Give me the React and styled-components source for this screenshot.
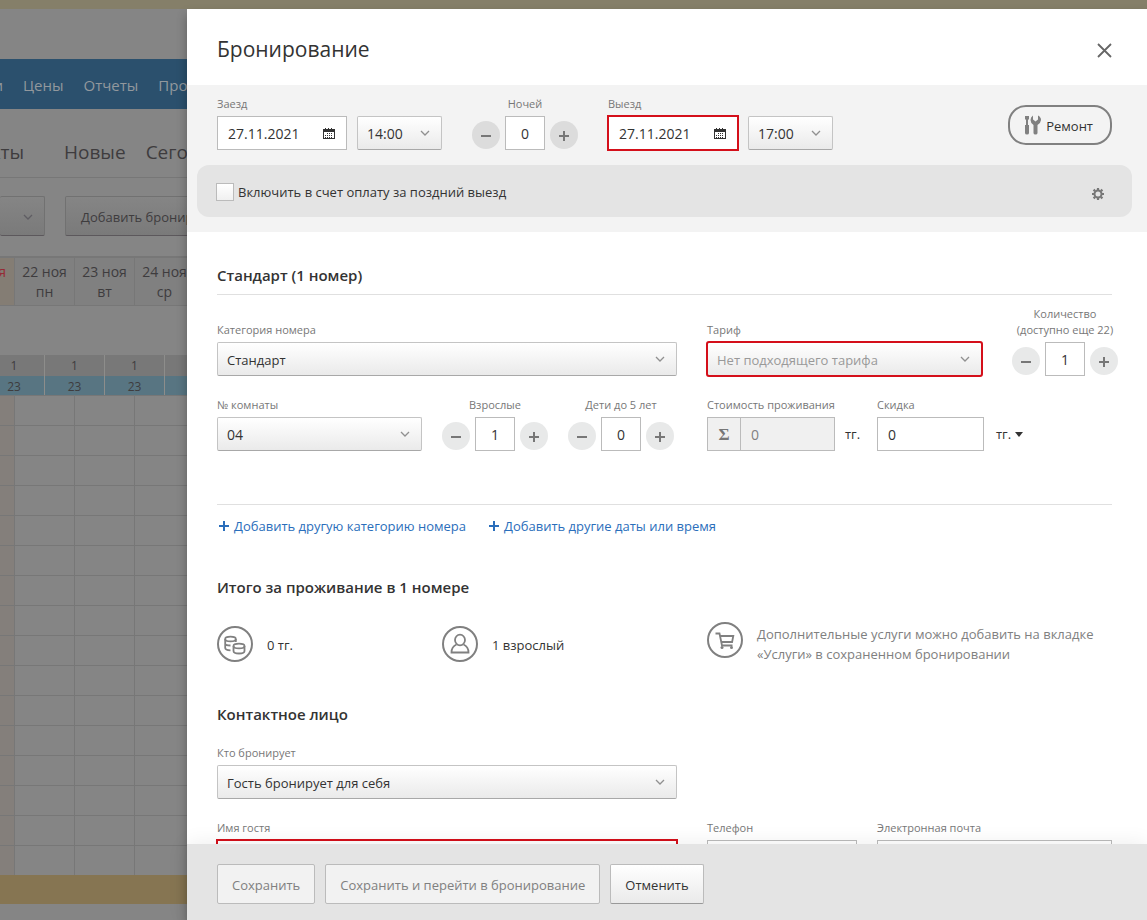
import React from 'react';
import styled, { createGlobalStyle, css } from 'styled-components';

const GlobalStyle = createGlobalStyle`
  * {
    box-sizing: border-box;
  }

  body {
    margin: 0;
    background: #858585;
    color: #333;
    font: 13px/20px "Open Sans", "Noto Sans", sans-serif;
  }

  button, input, select {
    margin: 0;
    font: inherit;
    color: inherit;
  }
`;

/* Page behind the drawer */

const Page = styled.div`
  position: relative;
  height: 100vh;
  overflow: hidden;
  color: #3e3c3e;
`;

const Strip = styled.div`
  height: 9px;
  background: #857f69;
`;

const Nav = styled.nav`
  display: flex;
  align-items: center;
  gap: 20px;
  height: 50px;
  margin-top: 50px;
  padding-top: 2px;
  background: #2b506d;
`;

const NavLink = styled.a`
  color: #92989d;
  font-size: 15px;
  white-space: nowrap;
  text-decoration: none;

  /* scrolled out to the left */
  &:first-child {
    display: flex;
    justify-content: flex-end;
    width: 3px;
  }
`;

const Tabs = styled.div`
  display: flex;
  align-items: center;
  gap: 20px;
  height: 69px;
  padding-top: 18px;
  border-bottom: 1px solid #777;
`;

const Tab = styled.a`
  color: inherit;
  font-size: 19px;
  white-space: nowrap;
  text-decoration: none;

  &:first-child {
    display: flex;
    justify-content: flex-end;
    width: 24px;
    margin-right: 20px;
  }
`;

const Actions = styled.div`
  display: flex;
  gap: 20px;
  padding: 18px 0 20px;
`;

const PageButton = styled.button`
  display: flex;
  align-items: center;
  justify-content: flex-end;
  height: 40px;
  padding: 2px 15px 0;
  border: 1px solid #717171;
  border-bottom-color: #5c585c;
  border-radius: 2px;
  background: linear-gradient(#858585, #7a7a7a);
  white-space: nowrap;

  &:first-child {
    width: 45px;
    padding-right: 11px;
    border-left: 0;
  }
`;

const Days = styled.div`
  display: flex;
  height: 50px;
  border-top: 2px solid #777;
  border-bottom: 1px solid #777;
  background: #808080;
  font-size: 14px;
`;

const Day = styled.div`
  display: flex;
  flex: none;
  flex-direction: column;
  align-items: ${({ $weekend }) => ($weekend ? 'flex-end' : 'center')};
  width: ${({ $weekend }) => ($weekend ? 15 : 60)}px;
  padding-top: 4px;
  padding-right: ${({ $weekend }) => ($weekend ? 8 : 0)}px;
  border-right: 1px solid #777;
  background: ${({ $weekend }) => ($weekend ? '#847d74' : 'none')};
  color: ${({ $weekend }) => ($weekend ? '#962a35' : 'inherit')};
  white-space: nowrap;
`;

const Counts = styled.div`
  display: flex;
  height: ${({ $free }) => ($free ? 19 : 21)}px;
  margin-top: ${({ $free }) => ($free ? 0 : 49)}px;
  background: ${({ $free }) => ($free ? '#587582' : '#787878')};
  font-size: 12px;
  line-height: 22px;
`;

const Count = styled.div`
  flex: none;
  width: 60px;
  border-right: 1px solid #8d8d8b;
  text-align: center;

  &:first-child {
    width: 45px;
    padding-right: 16px;
  }
`;

const Cells = styled.div`
  display: flex;
  height: 30px;
  border-top: 1px solid #777;
`;

const Cell = styled.div`
  flex: none;
  width: ${({ $weekend }) => ($weekend ? 15 : 60)}px;
  border-right: 1px solid #777;
  background: ${({ $weekend }) => ($weekend ? '#847f7b' : 'none')};
`;

const Category = styled.div`
  height: 29px;
  background: #867552;
`;

/* Drawer */

const Drawer = styled.section`
  position: absolute;
  top: 9px;
  right: 0;
  bottom: 0;
  left: 187px;
  display: flex;
  flex-direction: column;
  background: #fff;
  color: #333;
  box-shadow: 0 6px 10px rgba(0, 0, 0, .3);
`;

const Header = styled.header`
  display: flex;
  align-items: center;
  justify-content: space-between;
  height: 76px;
  padding: 4px 35px 0 30px;
`;

const Title = styled.h1`
  margin: 0;
  font-size: 21px;
  font-weight: 400;
  line-height: 28px;
`;

const IconButton = styled.button`
  display: flex;
  padding: 2px 0 0;
  border: 0;
  background: none;
  color: #666;
  cursor: pointer;
`;

const Period = styled.div`
  height: 147px;
  background: #f3f3f3;
`;

const PeriodFields = styled.div`
  display: flex;
  align-items: flex-end;
  height: 65px;
  padding: 0 35px 0 30px;
`;

const Pair = styled.div`
  display: flex;
  align-items: flex-end;
  gap: 10px;
  margin-right: 30px;
`;

const Repair = styled.button`
  display: flex;
  align-items: center;
  gap: 5px;
  height: 40px;
  margin: 0 0 5px auto;
  padding: 0 17px 0 15px;
  border: 2px solid #808080;
  border-radius: 18px;
  background: none;
  line-height: 22px;
  cursor: pointer;

  span {
    padding-top: 2px;
  }
`;

const LateCheckout = styled.div`
  display: flex;
  align-items: center;
  justify-content: space-between;
  height: 52px;
  margin: 15px 15px 0 10px;
  padding: 2px 28px 0 19px;
  border-radius: 12px;
  background: #e4e4e4;
`;

const CheckLabel = styled.label`
  display: flex;
  align-items: center;
  gap: 4px;
`;

const Checkbox = styled.input`
  appearance: none;
  width: 18px;
  height: 18px;
  margin: 0;
  border: 1px solid #bbb;
  background: linear-gradient(#fff, #f0f0f0);
`;

const Body = styled.div`
  flex: 1;
  min-height: 0;
  padding: 33px 35px 0 30px;
  overflow: hidden;
`;

const Heading = styled.h2`
  margin: 0;
  padding-bottom: ${({ $line }) => ($line ? 9 : 0)}px;
  border-bottom: ${({ $line }) => ($line ? '1px solid #e0e0e0' : 0)};
  font-size: 15px;
  font-weight: 600;
  line-height: 20px;
`;

const Grid = styled.div`
  display: grid;
  grid-template-columns: ${({ $columns }) => $columns};
  align-items: end;
  margin-top: ${({ $top }) => $top || 0}px;
  margin-right: ${({ $wide }) => ($wide ? -6 : 0)}px;
  column-gap: ${({ $gap }) => $gap || 0}px;
`;

const Field = styled.div`
  min-width: 0;
  width: ${({ $width }) => ($width ? `${$width}px` : 'auto')};
`;

const Label = styled.label`
  display: block;
  margin-bottom: 4px;
  color: #777;
  font-size: 11px;
  line-height: 16px;
  text-align: ${({ $center }) => ($center ? 'center' : 'left')};
  white-space: nowrap;
`;

const control = css`
  display: block;
  width: 100%;
  height: 34px;
  border: 1px solid #bbb;
  border-radius: ${({ $round }) => ($round ? 2 : 0)}px;
  outline: ${({ $error }) => ($error ? '2px solid #d40f1a' : 'none')};
  outline-offset: -1px;
`;

const Input = styled.input`
  ${control}
  padding: 1px 10px 0;
  background: #fff;
  font-size: 14px;

  &:disabled {
    background: #f0f0f0;
    color: #808080;
  }
`;

const Select = styled.select`
  ${control}
  appearance: none;
  padding: 2px 9px 0;
  border-color: #c4c4c4;
  border-bottom-color: #a8a8a8;
  background: linear-gradient(#fff, #eaeaea);
  color: ${({ $error }) => ($error ? '#999' : 'inherit')};
  font-size: ${({ $number }) => ($number ? 14 : 13)}px;
`;

const Overlaid = styled.div`
  position: relative;

  svg {
    position: absolute;
    top: 12px;
    right: 12px;
    pointer-events: none;
  }
`;

const Counter = styled.div`
  display: flex;
  align-items: flex-end;
  gap: 5px;
  width: 106px;

  input {
    width: 40px;
    padding: 1px 0 0;
    text-align: center;
  }
`;

const Round = styled.button`
  display: flex;
  align-items: center;
  justify-content: center;
  width: 28px;
  height: 28px;
  margin-bottom: 1px;
  padding: 2px 0 0;
  border: 0;
  border-radius: 50%;
  background: ${({ $dark }) => ($dark ? '#dcdcdc' : '#e8e9e9')};
  color: #777;
  cursor: pointer;
`;

const Money = styled.div`
  display: flex;
  align-items: center;
  white-space: nowrap;
`;

const Sigma = styled.span`
  flex: none;
  width: 33px;
  height: 34px;
  border: 1px solid #bbb;
  border-right: 0;
  background: #f0f0f0;
  color: #777;
  font: bold 17px/34px "Liberation Serif", serif;
  text-align: center;
`;

const Amount = styled.div`
  flex: none;
  width: ${({ $width }) => $width}px;
  margin-right: 10px;
`;

const CurrencyButton = styled.button`
  display: flex;
  align-items: center;
  gap: 4px;
  padding: 0 2px;
  border: 0;
  background: none;
`;

const Links = styled.div`
  display: flex;
  gap: 23px;
  margin-top: 53px;
  padding: 11px 2px 0;
  border-top: 1px solid #e0e0e0;
`;

const AddLink = styled.a`
  display: flex;
  align-items: center;
  gap: 5px;
  color: #2a6ebb;
  text-decoration: none;
`;

const Summary = styled.div`
  display: grid;
  grid-template-columns: 225px 1fr 405px;
  margin: 25px 0 40px;
`;

const Total = styled.div`
  display: flex;
  align-items: ${({ $note }) => ($note ? 'flex-start' : 'center')};
  gap: 14px;
  padding-top: ${({ $note }) => ($note ? 0 : 2)}px;
  color: ${({ $note }) => ($note ? '#808080' : 'inherit')};

  svg {
    flex: none;
    color: #808080;
  }

  span {
    padding-top: 2px;
  }
`;

const Section = styled.div`
  margin-top: 41px;
`;

const Footer = styled.footer`
  display: flex;
  gap: 10px;
  height: 76px;
  padding: 20px 30px;
  background: #e4e4e4;
  box-shadow: 0 0 20px rgba(0, 0, 0, .08);
  z-index: 1;
`;

const Button = styled.button`
  height: 40px;
  padding: 2px 14px 0;
  border: 1px solid #bbb;
  border-bottom-color: #999;
  border-radius: 2px;
  background: linear-gradient(#fff, #eaeaea);
  white-space: nowrap;
  cursor: pointer;

  &:disabled {
    border-color: #bbb;
    background: #f2f2f2;
    color: #808080;
  }
`;

const Chevron = ({ color = '#909090' }) => (
  <svg width="10" height="10" viewBox="0 0 10 10" fill="none" stroke={color} strokeWidth="1.3">
    <path d="M1 3l4 4 4-4" />
  </svg>
);

const CloseIcon = () => (
  <svg width="15" height="15" viewBox="0 0 15 15" fill="none" stroke="currentColor" strokeWidth="1.8">
    <path d="M1 1l13 13M14 1L1 14" />
  </svg>
);

const CalendarIcon = () => (
  <svg width="12" height="12" viewBox="0 0 12 12" fill="#333">
    <path d="M0 1h2V0h1v1h2V0h1v1h2V0h1v1h3v3H0z" />
    <path d="M0 4h12v7H0z" />
    <path d="M1 4h10v6H1z" fill="#fff" />
    <path d="M4 5h1v1H4zM6 5h1v1H6zM8 5h1v1H8zM2 7h1v1H2zM4 7h1v1H4zM6 7h1v1H6zM8 7h1v1H8z" />
    <path d="M2 9h1v1H2zM4 9h1v1H4zM6 9h1v1H6zM8 9h1v1H8z" />
  </svg>
);

const MinusIcon = () => (
  <svg width="10" height="10" viewBox="0 0 10 10" stroke="currentColor" strokeWidth="2">
    <path d="M0 5h10" />
  </svg>
);

const PlusIcon = () => (
  <svg width="10" height="10" viewBox="0 0 10 10" stroke="currentColor" strokeWidth="2">
    <path d="M0 5h10M5 0v10" />
  </svg>
);

const ToolsIcon = () => (
  <svg width="16" height="20" viewBox="0 0 16 20" fill="#808080">
    <path d="M0 1h4v3L3 5v5h1v8q0 1.500-2 1.500T0 18v-8h1V5L0 4z" />
    <path d="M8 .5v4l2.500 2 2.500-2v-4q3 1.500 3 4.500 0 2.500-3.500 5V18q0 1.500-2 1.500t-2-1.500v-8Q5.500 8 5.500 5 5.500 2 8 .5z" />
  </svg>
);

const GearIcon = () => (
  <svg width="12" height="16" viewBox="0 -3 12 16" fill="none" stroke="#777">
    <circle cx="6" cy="6" r="3.500" strokeWidth="2" />
    <path strokeWidth="2.200" d="M6 0v2M6 10v2M0 6h2M10 6h2M1.600 1.600l1.500 1.500M8.900 8.900l1.500 1.500M1.600 10.400l1.500-1.500M8.900 3.100l1.500-1.500" />
  </svg>
);

const Circled = ({ children }) => (
  <svg width="36" height="36" viewBox="0 0 36 36" fill="none" stroke="currentColor" strokeWidth="1.800">
    <circle cx="18" cy="18" r="17" strokeWidth="2" />
    {children}
  </svg>
);

const CoinsIcon = () => (
  <Circled>
    <ellipse cx="13.500" cy="13" rx="5.300" ry="2.400" />
    <path d="M8.200 13v9c0 1.200 2.200 2.200 5.300 2.400M8.200 17.500c0 1.200 2.200 2 5.300 2M18.800 13v3" />
    <ellipse cx="22" cy="20" rx="5.500" ry="2.400" />
    <path d="M16.500 20v5c0 1.400 2.400 2.500 5.500 2.500s5.500-1.100 5.500-2.500v-5" />
  </Circled>
);

const PersonIcon = () => (
  <Circled>
    <ellipse cx="18" cy="14" rx="5" ry="5.300" />
    <path d="M14.500 18.500C11 20 9.500 22 9.500 26.500h17c0-4.500-1.500-6.500-5-8" />
  </Circled>
);

const CartIcon = () => (
  <Circled>
    <path d="M8.500 11.500h4L15 23.500h10.500M12.800 14h13.500l-1.200 6H14.500" />
    <circle cx="15" cy="25.500" r="1.500" fill="currentColor" stroke="none" />
    <circle cx="24.500" cy="25.500" r="1.500" fill="currentColor" stroke="none" />
  </Circled>
);

const SelectField = ({ id, label, value, error, number, width }) => (
  <Field $width={width}>
    {label && <Label htmlFor={id}>{label}</Label>}
    <Overlaid>
      <Select id={id} aria-label={label ? undefined : 'Время'} $round $error={error} $number={number}>
        <option>{value}</option>
      </Select>
      <Chevron />
    </Overlaid>
  </Field>
);

const DateField = ({ id, label, value, error }) => (
  <Field $width={130}>
    <Label htmlFor={id}>{label}</Label>
    <Overlaid>
      <Input id={id} defaultValue={value} $error={error} />
      <CalendarIcon />
    </Overlaid>
  </Field>
);

const CounterField = ({ id, label, value, dark }) => (
  <Field $width={106}>
    <Label htmlFor={id} $center>{label}</Label>
    <Counter>
      <Round $dark={dark} type="button" aria-label="Меньше"><MinusIcon /></Round>
      <Input id={id} defaultValue={value} />
      <Round $dark={dark} type="button" aria-label="Больше"><PlusIcon /></Round>
    </Counter>
  </Field>
);

const days = [['22 ноя', 'пн'], ['23 ноя', 'вт'], ['24 ноя', 'ср']];
const rows = Array.from({ length: 16 }, (_, index) => index);

const Calendar = () => (
  <div>
    <Days>
      <Day $weekend>я</Day>
      {days.map(([date, weekday]) => (
        <Day key={date}>
          <span>{date}</span>
          <span>{weekday}</span>
        </Day>
      ))}
    </Days>
    <Counts>
      <Count>1</Count>
      <Count>1</Count>
      <Count>1</Count>
    </Counts>
    <Counts $free>
      <Count>23</Count>
      <Count>23</Count>
      <Count>23</Count>
    </Counts>
    {rows.map(row => (
      <Cells key={row}>
        <Cell $weekend />
        <Cell />
        <Cell />
        <Cell />
      </Cells>
    ))}
    <Category />
  </div>
);

const App = () => (
  <Page>
    <GlobalStyle />
    <Strip />
    <Nav>
      <NavLink href="#guests">и</NavLink>
      <NavLink href="#prices">Цены</NavLink>
      <NavLink href="#reports">Отчеты</NavLink>
      <NavLink href="#other">Прочее</NavLink>
    </Nav>
    <Tabs>
      <Tab href="#all">кты</Tab>
      <Tab href="#new">Новые</Tab>
      <Tab href="#today">Сегодня</Tab>
    </Tabs>
    <Actions>
      <PageButton type="button" aria-label="Период"><Chevron color="#5f5d63" /></PageButton>
      <PageButton type="button">Добавить бронирование</PageButton>
    </Actions>
    <Calendar />

    <Drawer>
      <Header>
        <Title>Бронирование</Title>
        <IconButton type="button" aria-label="Закрыть"><CloseIcon /></IconButton>
      </Header>

      <Period>
        <PeriodFields>
          <Pair>
            <DateField id="arrival" label="Заезд" value="27.11.2021" />
            <SelectField id="arrival-time" value="14:00" width={85} number />
          </Pair>
          <Pair>
            <CounterField id="nights" label="Ночей" value="0" dark />
          </Pair>
          <Pair>
            <DateField id="departure" label="Выезд" value="27.11.2021" error />
            <SelectField id="departure-time" value="17:00" width={85} number />
          </Pair>
          <Repair type="button"><ToolsIcon /><span>Ремонт</span></Repair>
        </PeriodFields>
        <LateCheckout>
          <CheckLabel>
            <Checkbox type="checkbox" />
            Включить в счет оплату за поздний выезд
          </CheckLabel>
          <IconButton type="button" aria-label="Настройки"><GearIcon /></IconButton>
        </LateCheckout>
      </Period>

      <Body>
        <Heading $line>Стандарт (1 номер)</Heading>
        <Grid $columns="1fr 275px 106px" $gap={30} $top={11} $wide>
          <SelectField id="category" label="Категория номера" value="Стандарт" />
          <SelectField id="rate" label="Тариф" value="Нет подходящего тарифа" error />
          <CounterField id="quantity" label={<>Количество<br />(доступно еще 22)</>} value="1" />
        </Grid>
        <Grid $columns="1fr 106px 119px 150px 235px" $gap={20} $top={21}>
          <SelectField id="room" label="№ комнаты" value="04" number />
          <CounterField id="adults" label="Взрослые" value="1" />
          <CounterField id="children" label="Дети до 5 лет" value="0" />
          <Field>
            <Label htmlFor="cost">Стоимость проживания</Label>
            <Money>
              <Sigma>Σ</Sigma>
              <Amount $width={95}><Input id="cost" defaultValue="0" disabled /></Amount>
              тг.
            </Money>
          </Field>
          <Field>
            <Label htmlFor="discount">Скидка</Label>
            <Money>
              <Amount $width={107}><Input id="discount" defaultValue="0" /></Amount>
              <CurrencyButton type="button">
                тг.
                <svg width="8" height="5" viewBox="0 0 8 5"><path d="M0 0h8L4 5z" fill="#333" /></svg>
              </CurrencyButton>
            </Money>
          </Field>
        </Grid>
        <Links>
          <AddLink href="#category"><PlusIcon />Добавить другую категорию номера</AddLink>
          <AddLink href="#arrival"><PlusIcon />Добавить другие даты или время</AddLink>
        </Links>

        <Section>
          <Heading>Итого за проживание в 1 номере</Heading>
          <Summary>
            <Total><CoinsIcon /><span>0 тг.</span></Total>
            <Total><PersonIcon /><span>1 взрослый</span></Total>
            <Total $note>
              <CartIcon />
              <span>
                Дополнительные услуги можно добавить на вкладке «Услуги» в сохраненном бронировании
              </span>
            </Total>
          </Summary>
        </Section>

        <Heading>Контактное лицо</Heading>
        <Grid $columns="1fr 405px" $gap={30} $top={21}>
          <SelectField id="payer" label="Кто бронирует" value="Гость бронирует для себя" />
        </Grid>
        <Grid $columns="1fr 405px" $gap={30} $top={21}>
          <Field>
            <Label htmlFor="guest">Имя гостя</Label>
            <Input id="guest" $error />
          </Field>
          <Grid $columns="150px 1fr" $gap={20}>
            <Field>
              <Label htmlFor="phone">Телефон</Label>
              <Input id="phone" />
            </Field>
            <Field>
              <Label htmlFor="email">Электронная почта</Label>
              <Input id="email" />
            </Field>
          </Grid>
        </Grid>
      </Body>

      <Footer>
        <Button type="button" disabled>Сохранить</Button>
        <Button type="button" disabled>Сохранить и перейти в бронирование</Button>
        <Button type="button">Отменить</Button>
      </Footer>
    </Drawer>
  </Page>
);

export default App;
